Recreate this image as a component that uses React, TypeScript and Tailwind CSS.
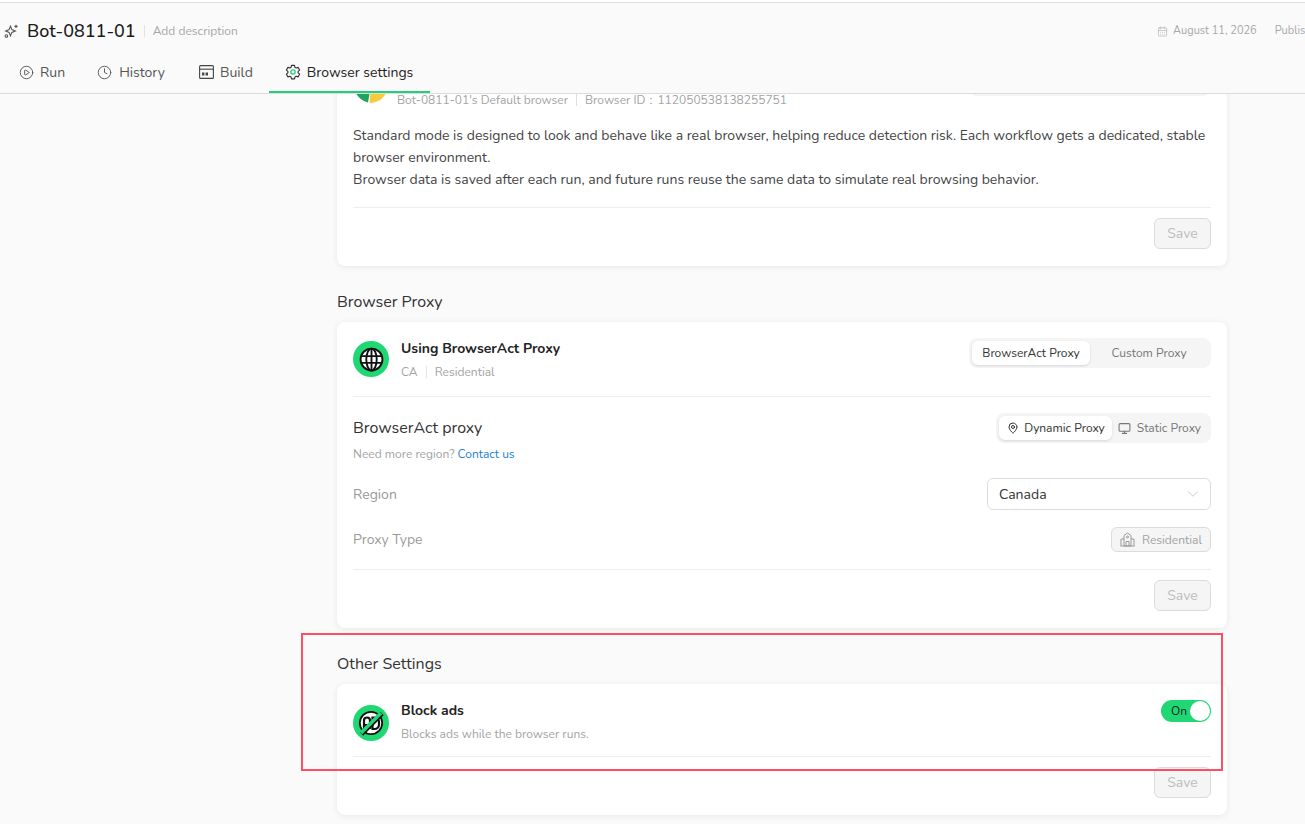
import { CirclePlay, Clock, MapPin, Monitor, ChevronDown, CalendarDays } from "lucide-react";

const font = "font-['Nunito','Open_Sans','Noto_Sans',sans-serif]";

function SaveButton() {
  return (
    <div className="flex justify-end pt-[10px]">
      <button className="w-[57px] h-[31px] rounded-md border border-[#dcdcdc] bg-[#f5f5f5] text-[14px] text-[#bdbdbd]">
        Save
      </button>
    </div>
  );
}

function SparkleIcon() {
  return (
    <svg width="16" height="16" viewBox="0 0 16 16" fill="none" stroke="#555" strokeWidth="1.1">
      <path d="M7.5 3.2 L8.9 6.6 L12.3 8 L8.9 9.4 L7.5 12.8 L6.1 9.4 L2.7 8 L6.1 6.6 Z" />
      <path d="M13 1.8v3.2M11.4 3.4h3.2" />
      <circle cx="3.4" cy="13" r="1.3" />
    </svg>
  );
}

function BuildIcon() {
  return (
    <svg width="15" height="14" viewBox="0 0 15 14" fill="none" stroke="#444" strokeWidth="1.1">
      <rect x="0.6" y="0.6" width="13.8" height="12.8" rx="1" />
      <path d="M0.6 4.2h13.8" />
      <path d="M3 7.5h2.4v3H3zM6.6 7.5H9v3H6.6z" fill="#444" stroke="none" />
    </svg>
  );
}

function GearIcon() {
  return (
    <svg width="16" height="16" viewBox="0 0 24 24" fill="none" stroke="#333" strokeWidth="1.7" strokeLinejoin="round">
      <path d="M9.7 2.5h4.6l.6 2.9 1.9 1.1 2.8-.9 2.3 4-2.2 2v2.2l2.2 2-2.3 4-2.8-.9-1.9 1.1-.6 2.9H9.7l-.6-2.9-1.9-1.1-2.8.9-2.3-4 2.2-2v-2.2l-2.2-2 2.3-4 2.8.9 1.9-1.1z" transform="translate(0 -0.5)" />
      <circle cx="12" cy="12" r="3.2" stroke="#22d07a" strokeWidth="2" />
    </svg>
  );
}

function ChromeIcon() {
  return (
    <svg width="36" height="36" viewBox="0 0 36 36">
      <path d="M18 18 L3 10 A18 18 0 0 0 15 35.6 Z" fill="#1ea362" />
      <path d="M18 18 L33 10 A18 18 0 0 1 16.5 36 Z" fill="#fbc93d" />
      <circle cx="18" cy="18" r="9" fill="#fff" />
    </svg>
  );
}

function GlobeIcon() {
  return (
    <div className="w-[36px] h-[36px] rounded-full bg-[#1fd873] flex items-center justify-center shrink-0">
      <svg width="25" height="25" viewBox="0 0 24 24" fill="#fff" stroke="#111" strokeWidth="1.8">
        <circle cx="12" cy="12" r="10.5" />
        <ellipse cx="12" cy="12" rx="5" ry="10.5" />
        <path d="M2 8.8h20M2 15.2h20M12 1.5v21" fill="none" />
      </svg>
    </div>
  );
}

function NoAdIcon() {
  return (
    <div className="w-[36px] h-[36px] rounded-full bg-[#1fd873] flex items-center justify-center shrink-0">
      <svg width="26" height="26" viewBox="0 0 26 26" fill="none">
        <circle cx="13" cy="13" r="11.2" fill="#fff" stroke="#111" strokeWidth="1.8" />
        <path d="M6 19V10.5a3 3 0 0 1 6 0V19M6 15h6" stroke="#111" strokeWidth="2.2" />
        <path d="M14.5 7.5h2a4.5 4.5 0 0 1 4.5 4.5v2.5a4.5 4.5 0 0 1-4.5 4.5h-2z" stroke="#111" strokeWidth="2.2" />
        <path d="M3.5 24 L24 3.5" stroke="#111" strokeWidth="4.6" />
        <path d="M3 23 L23 3" stroke="#1fd873" strokeWidth="3.6" />
      </svg>
    </div>
  );
}

function HouseIcon() {
  return (
    <svg width="15" height="15" viewBox="0 0 15 15" fill="none" stroke="#999" strokeWidth="1">
      <path d="M4 14V3.5L7.5 1 11 3.5V14z" />
      <path d="M1 14V7h3M14 14V7h-3M0.5 14h14" />
      <circle cx="7.5" cy="5" r="1" />
      <path d="M6 14v-4.5h3V14" />
    </svg>
  );
}

export default function App() {
  return (
    <div className={`${font} relative h-[824px] overflow-hidden bg-[#fafafa] text-[#222]`}>
      <div className="h-[2px] bg-white" />
      {/* Header */}
      <div className="h-[92px] border-t border-b border-t-[#dedede] border-b-[#dcdcdc] relative z-10 bg-[#fafafa] overflow-hidden">
        <div className="flex items-center h-[56px] pl-[3px]">
          <SparkleIcon />
          <span className="ml-[8px] text-[18px] font-medium text-[#1a1a1a]">Bot-0811-01</span>
          <span className="ml-[8px] w-px h-[12px] bg-[#e2e2e2]" />
          <span className="ml-[8px] text-[12px] text-[#a8a8a8]">Add description</span>
          <div className="ml-auto flex items-center whitespace-nowrap text-[11px] text-[#a8a8a8] w-[148px]">
            <CalendarDays className="w-[11px] h-[11px] mr-[5px] shrink-0" strokeWidth={1.3} />
            August 11, 2026
            <span className="mx-[9px] w-px h-[12px] bg-[#e2e2e2]" />
            Published
          </div>
        </div>
        <div className="flex items-start h-[34px] text-[14px] text-[#555]">
          <div className="flex items-center gap-[6px] pl-[19px] h-[26px]">
            <CirclePlay className="w-[15px] h-[15px]" strokeWidth={1.5} />
            Run
          </div>
          <div className="flex items-center gap-[7px] ml-[32px] h-[26px]">
            <Clock className="w-[15px] h-[15px]" strokeWidth={1.5} />
            History
          </div>
          <div className="flex items-center gap-[6px] ml-[34px] h-[26px]">
            <BuildIcon />
            Build
          </div>
          <div className="flex items-center gap-[6px] ml-[16px] h-[34px] w-[161px] pl-[16px] pb-[6px] border-b-2 border-[#22d07a] text-[#222]">
            <GearIcon />
            Browser settings
          </div>
        </div>
      </div>

      {/* Scrolled page, the first card starts under the header */}
      <div className="w-[890px] ml-[337px] -mt-[43px]">
        <div className="bg-white rounded-lg shadow-[0_1px_6px_rgba(0,0,0,0.08)] h-[215px] px-[16px]">
          <div className="flex items-start h-[74px] pt-[16px]">
            <div className="mr-[8px] shrink-0">
              <ChromeIcon />
            </div>
            <div className="flex items-center h-[20px] mt-[23px] text-[12px] text-[#a3a3a3] whitespace-nowrap">
              Bot-0811-01's Default browser
              <span className="mx-[8px] w-px h-[12px] bg-[#dedede]" />
              Browser ID：112050538138255751
            </div>
            <div className="ml-auto -mt-[1px] w-[242px] h-[30px] rounded-lg bg-[#f5f5f5]" />
          </div>
          <p className="text-[14px] leading-[22px] text-[#444] border-b border-[#eeeeee] pb-[16px]">
            Standard mode is designed to look and behave like a real browser, helping reduce detection risk. Each workflow gets a dedicated, stable browser environment.
            <br />
            Browser data is saved after each run, and future runs reuse the same data to simulate real browsing behavior.
          </p>
          <SaveButton />
        </div>

        <h2 className="text-[16px] leading-[22px] text-[#333] pt-[25px] pb-[9px] h-[56px]">Browser Proxy</h2>

        <div className="bg-white rounded-lg shadow-[0_1px_6px_rgba(0,0,0,0.08)] h-[306px] px-[16px]">
          <div className="flex items-start h-[75px] border-b border-[#eeeeee] pt-[16px]">
            <div className="mt-[3px] mr-[12px]">
              <GlobeIcon />
            </div>
            <div>
              <div className="text-[14px] leading-[20px] mt-[1px] font-bold text-[#222]">Using BrowserAct Proxy</div>
              <div className="flex items-center mt-[3px] text-[12px] leading-[20px] text-[#a3a3a3]">
                CA
                <span className="mx-[8px] w-px h-[12px] bg-[#e5e5e5]" />
                Residential
              </div>
            </div>
            <div className="ml-auto flex p-[3px] bg-[#f5f5f5] rounded-lg h-[30px] text-[12px]">
              <div className="flex items-center justify-center w-[118px] bg-white rounded-md shadow-sm text-[#333]">BrowserAct Proxy</div>
              <div className="flex items-center justify-center w-[118px] text-[#777]">Custom Proxy</div>
            </div>
          </div>

          <div className="flex items-start pt-[16px] h-[65px]">
            <div>
              <div className="text-[16px] leading-[29px] mt-[1px] text-[#333]">BrowserAct proxy</div>
              <div className="text-[12px] leading-[18px] mt-[2px] text-[#a3a3a3]">
                Need more region? <span className="text-[#1d7fd6]">Contact us</span>
              </div>
            </div>
            <div className="ml-auto flex p-[3px] bg-[#f5f5f5] rounded-lg h-[30px] text-[12px]">
              <div className="flex items-center gap-[5px] pl-[8px] pr-[7px] bg-white rounded-md shadow-sm text-[#333]">
                <MapPin className="w-[12px] h-[12px]" />
                Dynamic Proxy
              </div>
              <div className="flex items-center gap-[6px] pl-[6px] pr-[7px] text-[#777]">
                <Monitor className="w-[13px] h-[13px]" />
                Static Proxy
              </div>
            </div>
          </div>

          <div className="flex items-center justify-between h-[32px] mt-[16px]">
            <span className="text-[14px] text-[#999]">Region</span>
            <div className="flex items-center justify-between w-[224px] h-[32px] pl-[11px] pr-[8px] border border-[#dcdcdc] rounded-md text-[14px] text-[#333]">
              Canada
              <ChevronDown className="w-[18px] h-[18px] text-[#bbb]" strokeWidth={1} />
            </div>
          </div>

          <div className="flex items-center justify-between h-[25px] mt-[17px]">
            <span className="text-[14px] text-[#999]">Proxy Type</span>
            <div className="flex items-center justify-center gap-[7px] w-[100px] h-[25px] border border-[#dcdcdc] bg-[#f5f5f5] rounded-md text-[12px] text-[#a3a3a3]">
              <HouseIcon />
              Residential
            </div>
          </div>

          <div className="border-b border-[#eeeeee] mt-[17px]" />
          <SaveButton />
        </div>

        <h2 className="text-[16px] leading-[22px] text-[#333] pt-[25px] pb-[9px] h-[56px]">Other Settings</h2>

        <div className="bg-white rounded-lg shadow-[0_1px_6px_rgba(0,0,0,0.08)] h-[131px] px-[16px]">
          <div className="flex items-start h-[73px] border-b border-[#eeeeee] pt-[16px]">
            <div className="mt-[5px] mr-[12px]">
              <NoAdIcon />
            </div>
            <div>
              <div className="text-[14px] leading-[20px] mt-[1px] font-bold text-[#222]">Block ads</div>
              <div className="mt-[3px] text-[12px] leading-[20px] text-[#a3a3a3]">Blocks ads while the browser runs.</div>
            </div>
            <div className="ml-auto flex items-center justify-between w-[50px] h-[22px] rounded-full bg-[#1fd873] pl-[10px] pr-[1px] text-[12px] text-[#222]">
              On
              <span className="w-[20px] h-[20px] rounded-full bg-white" />
            </div>
          </div>
          <SaveButton />
        </div>
      </div>

      {/* Annotation drawn over the screenshot */}
      <div className="absolute left-[301px] top-[633px] w-[922px] h-[138px] border-2 border-[#ff4d63] pointer-events-none" />
    </div>
  );
}
